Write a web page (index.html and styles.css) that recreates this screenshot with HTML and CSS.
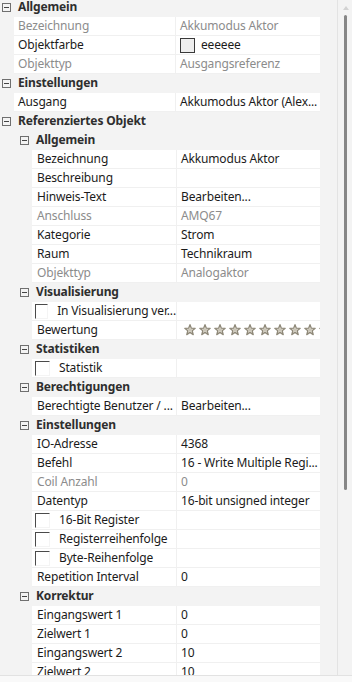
FILE: index.html
```html
<!DOCTYPE html>
<html lang="de">
<head>
    <meta charset="UTF-8">
    <meta name="viewport" content="width=device-width, initial-scale=1.0">
    <title>Eigenschaften</title>
    <link rel="stylesheet" href="styles.css">
</head>
<body>
    <svg class="defs" width="0" height="0">
        <symbol id="star" viewBox="0 0 12 12">
            <path d="M6 0.7 L7.35 4.14 L11.2 4.3 L8.19 6.71 L9.23 10.6 L6 8.4 L2.77 10.6 L3.81 6.71 L0.8 4.3 L4.65 4.14 Z" fill="#e4e1d8" stroke="#8f8979" stroke-width="1.3" stroke-linejoin="round"/>
            <path d="M6 3.2 L6.7 5 L8.6 5.1 L7.1 6.3 L7.6 8.2 L6 7.1 L4.4 8.2 L4.9 6.3 L3.4 5.1 L5.3 5 Z" fill="#c9c4b6"/>
        </symbol>
    </svg>

    <div class="panel">
        <div class="grid">
            <div class="rows">
                <!-- Allgemein -->
                <div class="cat l0"><span class="exp"></span><span class="cat-name">Allgemein</span></div>
                <div class="row l1"><div class="name dis">Bezeichnung</div><div class="val dis">Akkumodus Aktor</div></div>
                <div class="row l1"><div class="name">Objektfarbe</div><div class="val"><span class="swatch"></span>eeeeee</div></div>
                <div class="row l1"><div class="name dis">Objekttyp</div><div class="val dis">Ausgangsreferenz</div></div>

                <!-- Einstellungen -->
                <div class="cat l0"><span class="exp"></span><span class="cat-name">Einstellungen</span></div>
                <div class="row l1"><div class="name">Ausgang</div><div class="val">Akkumodus Aktor (Alex...</div></div>

                <!-- Referenziertes Objekt -->
                <div class="cat l0"><span class="exp"></span><span class="cat-name">Referenziertes Objekt</span></div>

                <div class="cat l1"><span class="exp"></span><span class="cat-name">Allgemein</span></div>
                <div class="row l2"><div class="name">Bezeichnung</div><div class="val">Akkumodus Aktor</div></div>
                <div class="row l2"><div class="name">Beschreibung</div><div class="val"></div></div>
                <div class="row l2"><div class="name">Hinweis-Text</div><div class="val">Bearbeiten...</div></div>
                <div class="row l2"><div class="name dis">Anschluss</div><div class="val dis">AMQ67</div></div>
                <div class="row l2"><div class="name">Kategorie</div><div class="val">Strom</div></div>
                <div class="row l2"><div class="name">Raum</div><div class="val">Technikraum</div></div>
                <div class="row l2"><div class="name dis">Objekttyp</div><div class="val dis">Analogaktor</div></div>

                <div class="cat l1"><span class="exp"></span><span class="cat-name">Visualisierung</span></div>
                <div class="row l2"><div class="name"><span class="check"></span>In Visualisierung ver...</div><div class="val"></div></div>
                <div class="row l2">
                    <div class="name">Bewertung</div>
                    <div class="val stars">
                        <svg class="star"><use href="#star"/></svg>
                        <svg class="star"><use href="#star"/></svg>
                        <svg class="star"><use href="#star"/></svg>
                        <svg class="star"><use href="#star"/></svg>
                        <svg class="star"><use href="#star"/></svg>
                        <svg class="star"><use href="#star"/></svg>
                        <svg class="star"><use href="#star"/></svg>
                        <svg class="star"><use href="#star"/></svg>
                        <svg class="star"><use href="#star"/></svg>
                        <svg class="star"><use href="#star"/></svg>
                    </div>
                </div>

                <div class="cat l1"><span class="exp"></span><span class="cat-name">Statistiken</span></div>
                <div class="row l2"><div class="name"><span class="check"></span>Statistik</div><div class="val"></div></div>

                <div class="cat l1"><span class="exp"></span><span class="cat-name">Berechtigungen</span></div>
                <div class="row l2"><div class="name">Berechtigte Benutzer / ...</div><div class="val">Bearbeiten...</div></div>

                <div class="cat l1"><span class="exp"></span><span class="cat-name">Einstellungen</span></div>
                <div class="row l2"><div class="name">IO-Adresse</div><div class="val">4368</div></div>
                <div class="row l2"><div class="name">Befehl</div><div class="val">16 - Write Multiple Regi...</div></div>
                <div class="row l2"><div class="name dis">Coil Anzahl</div><div class="val dis">0</div></div>
                <div class="row l2"><div class="name">Datentyp</div><div class="val">16-bit unsigned integer</div></div>
                <div class="row l2"><div class="name"><span class="check"></span>16-Bit Register</div><div class="val"></div></div>
                <div class="row l2"><div class="name"><span class="check"></span>Registerreihenfolge</div><div class="val"></div></div>
                <div class="row l2"><div class="name"><span class="check"></span>Byte-Reihenfolge</div><div class="val"></div></div>
                <div class="row l2"><div class="name">Repetition Interval</div><div class="val">0</div></div>

                <div class="cat l1"><span class="exp"></span><span class="cat-name">Korrektur</span></div>
                <div class="row l2"><div class="name">Eingangswert 1</div><div class="val">0</div></div>
                <div class="row l2"><div class="name">Zielwert 1</div><div class="val">0</div></div>
                <div class="row l2"><div class="name">Eingangswert 2</div><div class="val">10</div></div>
                <div class="row l2"><div class="name">Zielwert 2</div><div class="val">10</div></div>
            </div>
        </div>
        <div class="vscroll">
            <span class="arrow"></span>
            <div class="thumb"></div>
        </div>
    </div>
    <div class="footer"></div>
</body>
</html>
```

FILE: styles.css
```css
body {
    margin: 0;
    background: #f3f3f3;
    font-family: "Noto Sans", "Open Sans", sans-serif;
    font-size: 12px;
    letter-spacing: -0.15px;
    color: #1b1b1b;
    overflow: hidden;
}
.defs {
    position: absolute;
}
.panel {
    display: flex;
    height: 675px;
    border-bottom: 1px solid #e2e2e2;
}
.grid {
    width: 320px;
    padding-right: 17px;
    border-right: 1px solid #e3e3e3;
    overflow: hidden;
}
.rows {
    margin-top: -2px;
}
.cat, .row {
    height: 18px;
    border-bottom: 1px solid #f0f0f0;
    line-height: 18px;
    white-space: nowrap;
}
.cat {
    display: flex;
    align-items: center;
    border-bottom-color: #f3f3f3;
    font-weight: bold;
    color: #2e2e2e;
}
.cat.l0 {
    padding-left: 2px;
}
.cat.l1 {
    padding-left: 20px;
}
.exp {
    position: relative;
    width: 7px;
    height: 7px;
    border: 1px solid #6f6f6f;
    margin-right: 7px;
}
.exp::after {
    content: "";
    position: absolute;
    left: 1px;
    top: 3px;
    width: 5px;
    height: 1px;
    background: #444;
}
.row {
    display: flex;
    background: #fff;
}
.row.l1 {
    margin-left: 14px;
}
.row.l2 {
    margin-left: 32px;
}
.name {
    display: flex;
    align-items: center;
    padding-left: 4px;
    overflow: hidden;
}
.l1 .name {
    width: 157px;
}
.l2 .name {
    width: 139px;
    padding-left: 5px;
}
.val {
    display: flex;
    align-items: center;
    flex: 1;
    padding-left: 4px;
    border-left: 1px solid #f0f0f0;
    overflow: hidden;
}
.dis {
    color: #8c8c8c;
}
.swatch {
    width: 13px;
    height: 13px;
    border: 1px solid #3a3a3a;
    background: #eeeeee;
    margin-right: 6px;
}
.check {
    width: 13px;
    height: 13px;
    margin-left: -2px;
    margin-right: 9px;
    background: #fff;
    border-top: 1px solid #4a4a4a;
    border-left: 1px solid #4a4a4a;
    border-right: 1px solid #f4f4f4;
    border-bottom: 1px solid #f4f4f4;
}
.stars {
    padding-left: 7px;
    gap: 3px;
}
.star {
    flex: none;
    width: 12px;
    height: 12px;
}
.vscroll {
    position: relative;
    flex: 1;
}
.arrow {
    position: absolute;
    left: 5px;
    top: 6px;
    border-left: 3px solid transparent;
    border-right: 3px solid transparent;
    border-bottom: 4px solid #d2d2d2;
}
.thumb {
    position: absolute;
    left: 6px;
    top: 15px;
    width: 3px;
    height: 475px;
    border-radius: 2px;
    background: #868686;
}
.footer {
    height: 6px;
    background: #f9f9f9;
}
```
